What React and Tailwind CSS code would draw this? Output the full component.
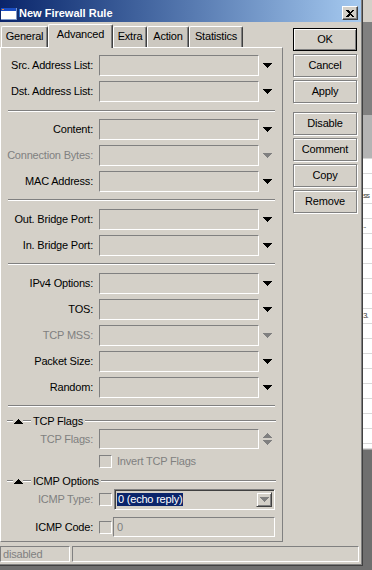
import React from "react";

function DownArrow({ disabled }) {
    const c = disabled ? "#808080" : "#000000";
    return (
        <svg width="9" height="5" shapeRendering="crispEdges">
            <rect x="0" y="0" width="9" height="1" fill={c} />
            <rect x="1" y="1" width="7" height="1" fill={c} />
            <rect x="2" y="2" width="5" height="1" fill={c} />
            <rect x="3" y="3" width="3" height="1" fill={c} />
            <rect x="4" y="4" width="1" height="1" fill={c} />
        </svg>
    );
}

function UpArrow({ color = "#000000" }) {
    return (
        <svg width="9" height="5" shapeRendering="crispEdges">
            <rect x="4" y="0" width="1" height="1" fill={color} />
            <rect x="3" y="1" width="3" height="1" fill={color} />
            <rect x="2" y="2" width="5" height="1" fill={color} />
            <rect x="1" y="3" width="7" height="1" fill={color} />
            <rect x="0" y="4" width="9" height="1" fill={color} />
        </svg>
    );
}

function Field({ className = "w-[160px]", children }) {
    return (
        <div className={`h-full border border-t-[#808080] border-l-[#808080] border-b-white border-r-white flex items-center ${className}`}>
            {children}
        </div>
    );
}

function Row({ label, disabled, mt = "mt-[5px]" }) {
    return (
        <div className={`flex items-center h-[21px] ${mt}`}>
            <div className={`w-[92px] text-right whitespace-nowrap ${disabled ? "text-[#808080]" : "text-black"}`}>{label}</div>
            <div className="ml-[6px] h-full">
                <Field />
            </div>
            <div className="ml-[4px] w-[10px] flex">
                <DownArrow disabled={disabled} />
            </div>
        </div>
    );
}

function Separator({ mt = "mt-[7px]", mb = "mb-[8px]" }) {
    return <div className={`mx-[7px] h-[2px] border-t border-t-[#808080] border-b border-b-white ${mt} ${mb}`} />;
}

function GroupHeader({ title, mt }) {
    return (
        <div className={`flex items-center h-[14px] ml-[6px] mr-[6px] ${mt}`}>
            <div className="w-[6px] h-[2px] border-t border-t-[#808080] border-b border-b-white" />
            <div className="w-[10px] flex justify-center"><UpArrow /></div>
            <div className="w-[8px] h-[2px] border-t border-t-[#808080] border-b border-b-white" />
            <span className="mx-[2px] text-black">{title}</span>
            <div className="flex-1 h-[2px] border-t border-t-[#808080] border-b border-b-white" />
        </div>
    );
}

function Checkbox() {
    return <div className="w-[13px] h-[13px] border border-t-[#808080] border-l-[#808080] border-b-white border-r-white" />;
}

function Tab({ label, selected, w }) {
    if (selected) {
        return (
            <div className={`${w} h-[24px] -mb-px relative z-10 bg-[#d4d0c8] border-t border-l border-t-white border-l-white border-r border-r-[#404040] rounded-t-[2px] flex justify-center pt-[4px] shadow-[inset_-1px_0_#808080]`}>
                {label}
            </div>
        );
    }
    return (
        <div className={`${w} h-[21px] bg-[#ccc8c0] border-t border-l border-t-white border-l-white border-r border-r-[#404040] rounded-t-[2px] flex justify-center pt-[4px] shadow-[inset_-1px_0_#808080]`}>
            {label}
        </div>
    );
}

function Button({ label, isDefault, mt = "mt-[3px]" }) {
    return (
        <div
            className={`${mt} h-[23px] w-[64px] flex items-center justify-center bg-[#d4d0c8] border ${
                isDefault
                    ? "border-black shadow-[inset_1px_1px_#ffffff,inset_-1px_-1px_#808080]"
                    : "border-[#808080] shadow-[inset_1px_1px_#ffffff,1px_1px_#ffffff]"
            }`}
        >
            {label}
        </div>
    );
}

const stripRows = Array.from({ length: 19 }, (_, i) => i);
const stripText = { 2: "ss", 4: "..", 10: "3." };

export default function App() {
    return (
        <div className="w-[372px] h-[570px] flex bg-[#6f6f6f] overflow-hidden font-['Liberation_Sans'] text-[11px] leading-none tracking-[-0.2px] text-black">
            {/* dialog window */}
            <div className="w-[363px] h-[566px] flex flex-col bg-[#d4d0c8] shadow-[inset_-1px_-1px_#404040,inset_-2px_-2px_#808080]">
                {/* title bar */}
                <div className="h-[22px] mr-[2px] flex items-center pt-[5px] bg-gradient-to-r from-[#0a246a] to-[#a6caf0]">
                    <svg width="16" height="12" className="ml-[1px]" shapeRendering="crispEdges">
                        <rect x="0" y="0" width="16" height="12" fill="#ffffff" />
                        <rect x="0" y="0" width="16" height="3" fill="#1c4fc4" />
                        <rect x="1" y="1" width="2" height="1" fill="#f08a3a" />
                        <rect x="15" y="0" width="1" height="12" fill="#7a96c8" />
                        <rect x="0" y="11" width="16" height="1" fill="#7a96c8" />
                    </svg>
                    <span className="ml-[2px] font-bold text-white tracking-normal">New Firewall Rule</span>
                    <div className="ml-auto mr-[3px] mb-[1px] w-[16px] h-[14px] bg-[#d4d0c8] border border-t-white border-l-white border-b-[#404040] border-r-[#404040] shadow-[inset_-1px_-1px_#808080] flex items-center justify-center">
                        <svg width="8" height="7" shapeRendering="crispEdges">
                            <path d="M0 0h2l2 2 2-2h2L5 3.5 8 7H6L4 5 2 7H0l3-3.5z" fill="#000000" />
                        </svg>
                    </div>
                </div>

                {/* body */}
                <div className="flex">
                    <div className="w-[284px] pt-[2px]">
                        <div className="h-[23px] flex items-end pl-[1px]">
                            <Tab label="General" w="w-[47px]" />
                            <Tab label="Advanced" w="w-[65px]" selected />
                            <Tab label="Extra" w="w-[34px]" />
                            <Tab label="Action" w="w-[42px]" />
                            <Tab label="Statistics" w="w-[54px]" />
                        </div>
                        <div className="w-[283px] h-[495px] border-t border-l border-t-white border-l-white border-r border-b border-r-[#808080] border-b-[#808080] pt-[7px] flex flex-col">
                            <Row label="Src. Address List:" mt="mt-0" />
                            <Row label="Dst. Address List:" />
                            <Separator mt="mt-[8px]" mb="mb-[7px]" />
                            <Row label="Content:" mt="mt-0" />
                            <Row label="Connection Bytes:" disabled />
                            <Row label="MAC Address:" />
                            <Separator />
                            <Row label="Out. Bridge Port:" mt="mt-0" />
                            <Row label="In. Bridge Port:" />
                            <Separator />
                            <Row label="IPv4 Options:" mt="mt-0" />
                            <Row label="TOS:" />
                            <Row label="TCP MSS:" disabled />
                            <Row label="Packet Size:" />
                            <Row label="Random:" />
                            <Separator mt="mt-[7px]" mb="mb-0" />

                            <GroupHeader title="TCP Flags" mt="mt-[7px]" />
                            <div className="flex items-center h-[20px] mt-[1px]">
                                <div className="w-[92px] text-right text-[#808080]">TCP Flags:</div>
                                <div className="ml-[6px] h-full">
                                    <Field />
                                </div>
                                <div className="ml-[4px] w-[10px] flex flex-col gap-[2px]">
                                    <UpArrow color="#808080" />
                                    <DownArrow disabled />
                                </div>
                            </div>
                            <div className="flex items-center h-[13px] mt-[6px] pl-[98px]">
                                <Checkbox />
                                <span className="ml-[5px] text-[#808080]">Invert TCP Flags</span>
                            </div>

                            <GroupHeader title="ICMP Options" mt="mt-[6px]" />
                            <div className="flex items-center h-[21px] mt-[1px]">
                                <div className="w-[92px] text-right text-[#808080]">ICMP Type:</div>
                                <div className="ml-[6px]"><Checkbox /></div>
                                <div className="ml-[2px] w-[161px] h-full border border-t-[#808080] border-l-[#808080] border-b-white border-r-white shadow-[inset_1px_1px_#404040,inset_-1px_-1px_#d4d0c8] flex items-center pl-[2px] pr-[2px]">
                                    <span className="h-[13px] px-[1px] flex items-center bg-[#0a246a] text-white">0 (echo reply)</span>
                                    <div className="ml-auto w-[16px] h-[15px] bg-[#d4d0c8] border border-t-[#d4d0c8] border-l-[#d4d0c8] border-b-[#404040] border-r-[#404040] shadow-[inset_1px_1px_#ffffff,inset_-1px_-1px_#808080] flex items-center justify-center">
                                        <DownArrow disabled />
                                    </div>
                                </div>
                            </div>
                            <div className="flex items-center h-[20px] mt-[7px]">
                                <div className="w-[92px] text-right text-black">ICMP Code:</div>
                                <div className="ml-[6px]"><Checkbox /></div>
                                <div className="ml-[1px] h-full">
                                    <Field className="w-[162px] pl-[3px] text-[#808080]">0</Field>
                                </div>
                            </div>
                        </div>
                    </div>

                    <div className="ml-[9px] pt-[6px] flex flex-col">
                        <Button label="OK" isDefault mt="mt-0" />
                        <Button label="Cancel" />
                        <Button label="Apply" />
                        <Button label="Disable" mt="mt-[9px]" />
                        <Button label="Comment" />
                        <Button label="Copy" />
                        <Button label="Remove" />
                    </div>
                </div>

                {/* status bar */}
                <div className="mt-[4px] h-[16px] flex">
                    <div className="w-[70px] h-full border border-t-[#808080] border-l-[#808080] border-b-white border-r-white flex items-center pl-[2px] text-[#808080]">
                        disabled
                    </div>
                    <div className="ml-[2px] w-[287px] h-full border border-t-[#808080] border-l-[#808080] border-b-white border-r-white" />
                </div>
            </div>

            {/* window behind */}
            <div className="w-[9px] flex flex-col">
                <div className="h-[22px] bg-[#d4d0c8]" />
                <div className="h-[93px] bg-[#808080]" />
                <div className="h-[44px] bg-[#b4b4b4] border-b border-b-[#d8d8d8]" />
                <div className="bg-white flex flex-col">
                    {stripRows.map((i) => (
                        <div key={i} className="h-[15px] border-b border-b-[#d8d8d8] overflow-hidden whitespace-nowrap flex items-center text-[8px] tracking-[-1px] text-[#404040]">
                            {stripText[i] || ""}
                        </div>
                    ))}
                    <div className="h-[4px]" />
                </div>
                <div className="h-[2px] border-t border-t-[#d8d8d8] border-b border-b-[#a0a0a0] bg-white" />
                <div className="flex-1 bg-[#6f6f6f]" />
            </div>
        </div>
    );
}
